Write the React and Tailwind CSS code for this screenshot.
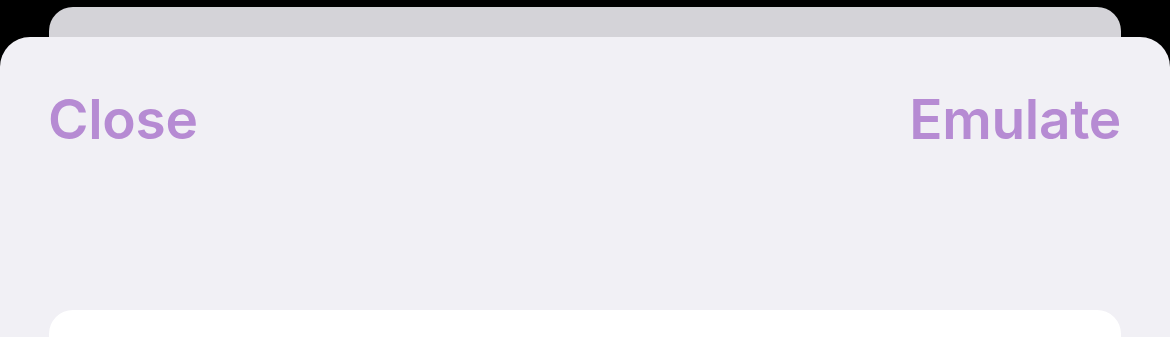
export default function App() {
  return (
    <div className="h-[337px] w-[1170px] overflow-hidden bg-black pt-[7px]" style={{ fontFamily: 'Inter, "Liberation Sans", Arial, sans-serif' }}>
      <div className="mx-[49px] h-[30px] rounded-t-[24px] bg-[#d4d3d8]" />
      <div className="h-[300px] rounded-t-[30px] bg-[#f1f0f5]">
        <div className="flex items-start justify-between pl-[48px] pr-[49px] pt-[55px]">
          <span className="text-[55px] font-semibold leading-none tracking-[-0.3px] text-[#b68bd3]">Close</span>
          <span className="text-[55px] font-semibold leading-none tracking-[-0.3px] text-[#b68bd3]">Emulate</span>
        </div>
        <div className="mx-[49px] mt-[163px] h-[100px] rounded-t-[24px] bg-white" />
      </div>
    </div>
  );
}
